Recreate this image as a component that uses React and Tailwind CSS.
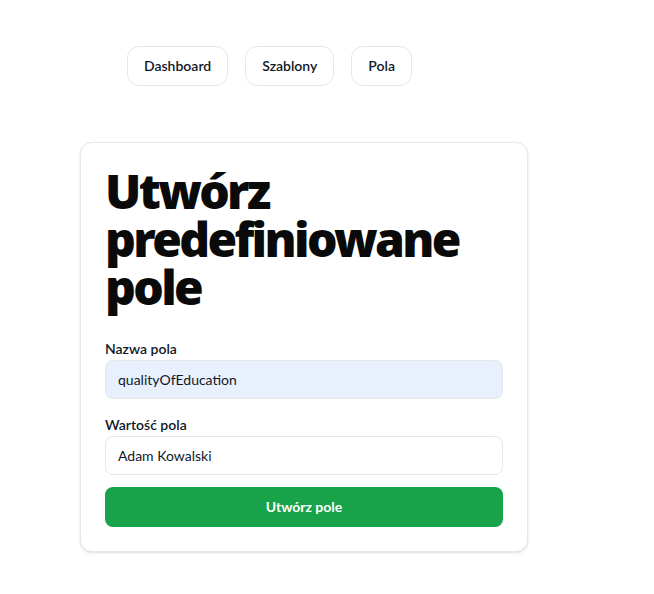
import React from 'react';

const NavButton = ({ children }) => (
  <button className="px-4 py-[9px] text-sm font-semibold text-gray-900 bg-white border border-gray-200 rounded-xl leading-5">
    {children}
  </button>
);

const App = () => {
  return (
    <div className="min-h-screen bg-white font-['Lato','Segoe_UI',sans-serif] text-gray-900">
      {/* Top nav */}
      <nav className="flex gap-[17px] pl-[127px] pt-[46px]">
        <NavButton>Dashboard</NavButton>
        <NavButton>Szablony</NavButton>
        <NavButton>Pola</NavButton>
      </nav>

      {/* Form card */}
      <div className="ml-20 mt-[56px] w-[448px] bg-white border border-gray-200 rounded-xl shadow-sm p-6">
        <h1 className="font-['Noto_Sans',sans-serif] text-5xl leading-[48px] font-black tracking-[-0.055em] text-[#0a0a0a] mb-7">
          Utwórz predefiniowane pole
        </h1>

        <form className="flex flex-col" onSubmit={(e) => e.preventDefault()}>
          <label className="block text-sm font-semibold leading-5 mb-px">Nazwa pola</label>
          <input
            defaultValue="qualityOfEducation"
            className="w-full h-[39px] px-3 text-sm bg-[#e8f0fe] border border-gray-200 rounded-lg outline-none"
          />

          <label className="block text-sm font-semibold leading-5 mb-px mt-4">Wartość pola</label>
          <input
            defaultValue="Adam Kowalski"
            className="w-full h-[39px] px-3 text-sm bg-white border border-gray-200 rounded-lg outline-none"
          />

          <button
            type="submit"
            className="mt-3 w-full h-10 bg-[#18a34a] text-white text-sm font-bold rounded-lg"
          >
            Utwórz pole
          </button>
        </form>
      </div>
    </div>
  );
};

export default App;
